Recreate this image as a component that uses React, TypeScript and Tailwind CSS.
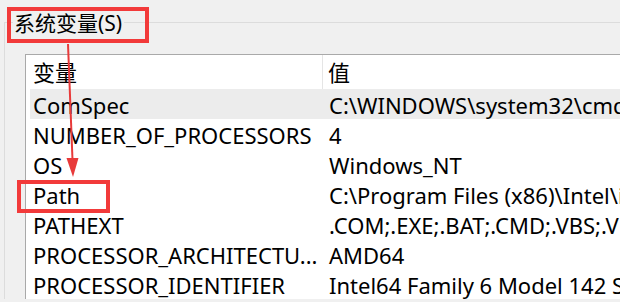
import React from 'react';

const rows = [
  { name: 'ComSpec', value: 'C:\\WINDOWS\\system32\\cmd.exe', selected: true },
  { name: 'NUMBER_OF_PROCESSORS', value: '4' },
  { name: 'OS', value: 'Windows_NT' },
  { name: 'Path', value: 'C:\\Program Files (x86)\\Intel\\iCLS Client\\;C:\\Program Files\\Intel' },
  { name: 'PATHEXT', value: '.COM;.EXE;.BAT;.CMD;.VBS;.VBE;.JS;.JSE;.WSF;.WSH;.MSC' },
  { name: 'PROCESSOR_ARCHITECTU...', value: 'AMD64' },
  { name: 'PROCESSOR_IDENTIFIER', value: 'Intel64 Family 6 Model 142 Stepping 9, GenuineIntel' },
];

const App: React.FC = () => {
  return (
    <div
      className="relative w-[620px] h-[302px] overflow-hidden bg-[#f0f0f0] text-[22px] text-black"
      style={{ fontFamily: '"Noto Sans", "Noto Sans CJK SC", sans-serif' }}
    >
      {/* Group box */}
      <div className="ml-[4px] mt-[22px] w-[700px] border-t border-l border-[#dcdcdc]">
        <div className="-mt-[12px] ml-[8px] w-fit bg-[#f0f0f0] pl-[1px] pr-[2px] text-[21px] leading-[24px]">系统变量(S)</div>

        {/* List view */}
        <div className="ml-[20px] mt-[19px] border-t border-l border-[#a9a9a9] bg-white">
          <div className="flex h-[34px] items-center">
            <div className="flex h-full w-[297px] items-center border-r border-[#e5e5e5] pl-[7px] leading-none">变量</div>
            <div className="pl-[5px] leading-none">值</div>
          </div>
          <div className="pl-[4px]">
            {rows.map((row) => (
              <div
                key={row.name}
                className={`flex h-[30px] whitespace-nowrap pt-[3px] leading-[26px] ${row.selected ? 'bg-[#ececec]' : ''}`}
              >
                <div className="w-[297px] shrink-0 pl-[3px]">{row.name}</div>
                <div className="pl-[2px]">{row.value}</div>
              </div>
            ))}
          </div>
        </div>
      </div>

      {/* Annotations */}
      <div className="pointer-events-none absolute left-[7px] top-[7px] h-[36px] w-[142px] border-[4px] border-[#f23a3a]" />
      <div className="pointer-events-none absolute left-[17px] top-[180px] h-[33px] w-[93px] border-[4px] border-[#f23a3a]" />
      <svg className="pointer-events-none absolute left-0 top-0" width="620" height="302">
        <line x1="68" y1="44" x2="72.5" y2="160" stroke="#e83a3a" strokeWidth="2" />
        <polygon points="66.5,158 78.5,158 73,177" fill="#e83a3a" />
      </svg>
    </div>
  );
};

export default App;
